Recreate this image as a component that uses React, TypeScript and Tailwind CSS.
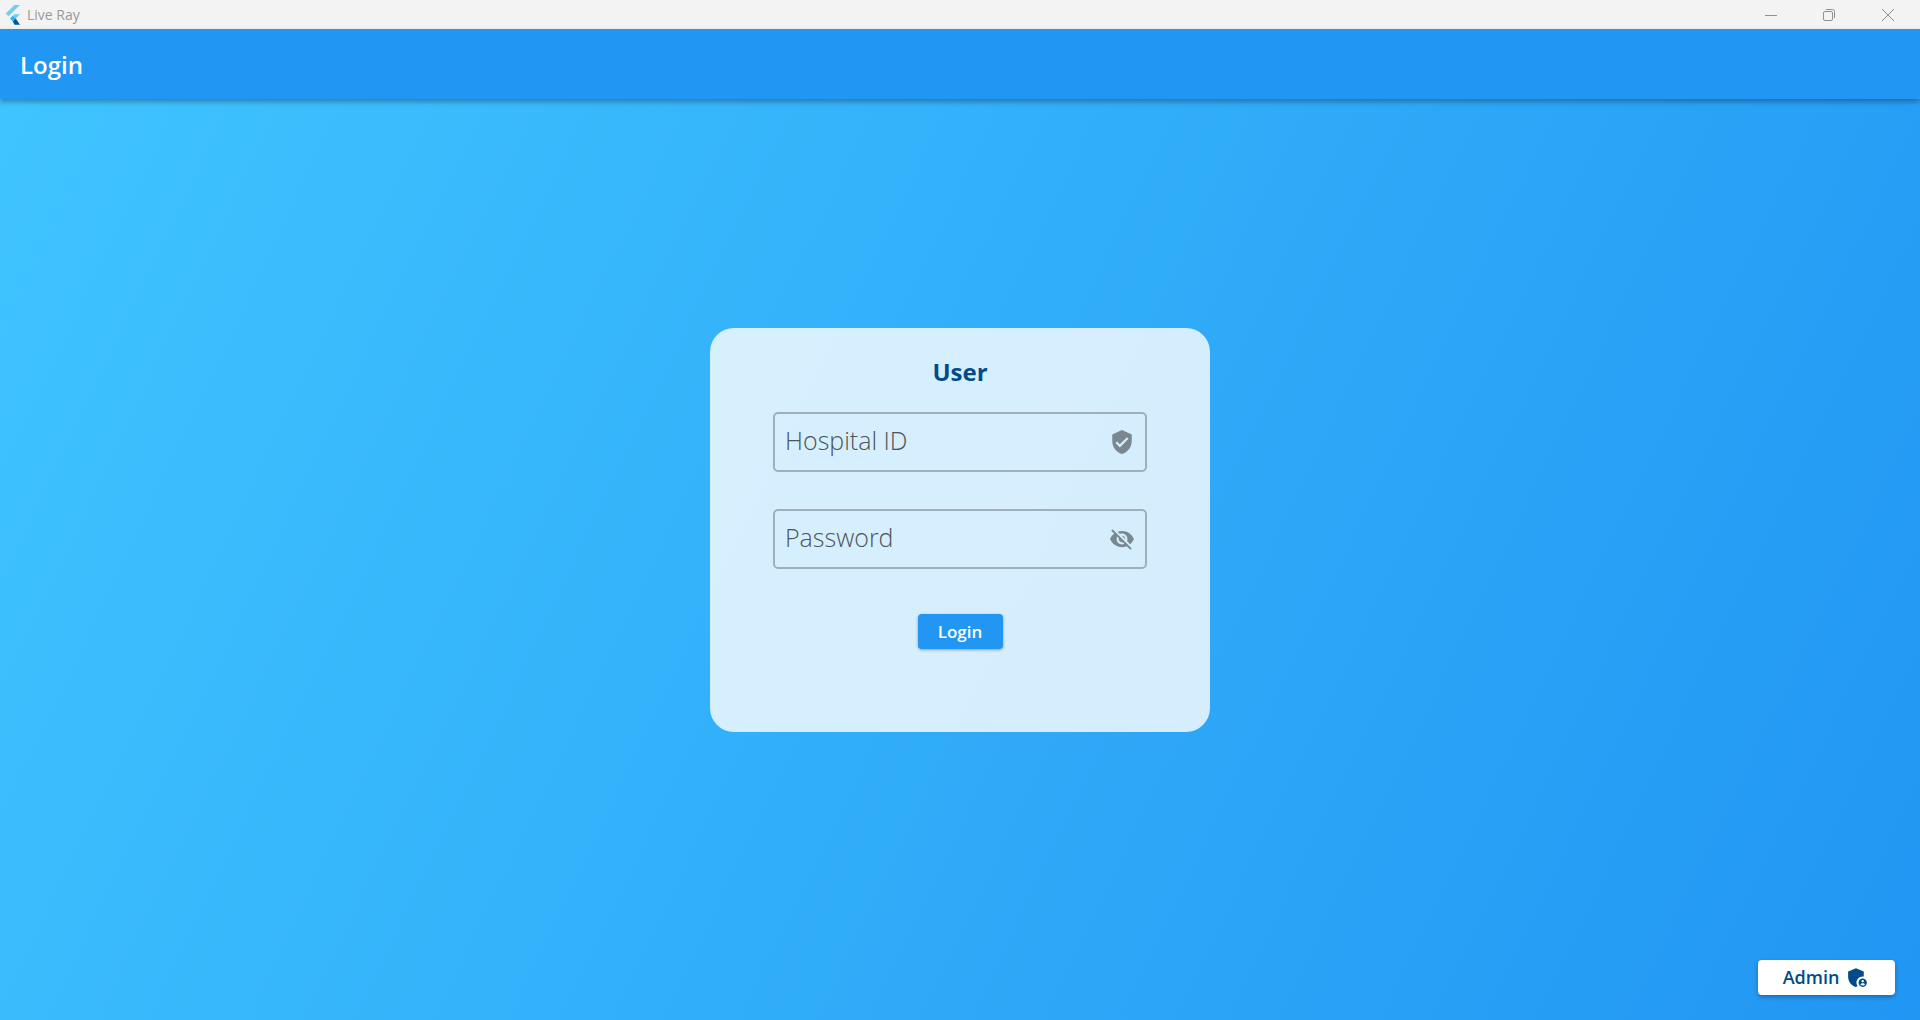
import { MdVerifiedUser, MdVisibilityOff, MdAdminPanelSettings } from 'react-icons/md';

function FlutterLogo() {
    return (
        <svg width="17" height="20" viewBox="0 0 16 20" className="ml-1">
            <path d="M10 0h5.5L4 11.2 1.2 8.5z" fill="#6fcff8" />
            <path d="M15.5 9.2H10L5.6 13.6l2.8 2.8z" fill="#6fcff8" />
            <path d="M5.6 13.6l2.8-2.6 2.8 2.6-2.8 2.8z" fill="#29b6f6" />
            <path d="M8.4 16.4l2.8-2.8 4.3 6.2H10z" fill="#01579b" />
        </svg>
    );
}

function WindowControls() {
    return (
        <div className="flex items-center h-full gap-[46px] pr-[26px]">
            <svg width="12" height="12" viewBox="0 0 12 12" fill="none" stroke="#8f8f8f">
                <path d="M0 6.5h12" />
            </svg>
            <svg width="12" height="12" viewBox="0 0 12 12" fill="none" stroke="#8f8f8f">
                <rect x="0.5" y="2.5" width="9" height="9" rx="1.5" />
                <path d="M3 0.5h6.5a2 2 0 0 1 2 2V9" />
            </svg>
            <svg width="12" height="12" viewBox="0 0 12 12" fill="none" stroke="#8f8f8f" className="ml-px">
                <path d="M0 0l12 12M12 0L0 12" />
            </svg>
        </div>
    );
}

function Field({ label, children, className }: { label: string; children: React.ReactNode; className?: string }) {
    return (
        <div className={`h-[60px] border-2 border-[#9fb0bd] rounded-[5px] flex items-center justify-between pl-[10px] pr-[10px] ${className ?? ''}`}>
            <span className="text-[25px] font-light text-[#4f5458] leading-none -mt-[4px]">{label}</span>
            {children}
        </div>
    );
}

export default function App() {
    return (
        <div className="h-screen flex flex-col overflow-hidden relative font-['Open_Sans',sans-serif]">
            {/* window title bar */}
            <div className="h-[29px] shrink-0 bg-[#f3f3f3] flex items-center justify-between">
                <div className="flex items-center">
                    <FlutterLogo />
                    <span className="ml-[6px] text-[14px] text-[#9a9a9a] leading-none">Live Ray</span>
                </div>
                <WindowControls />
            </div>

            {/* app bar */}
            <div className="h-[70px] shrink-0 bg-[#2196f3] flex items-center pl-5 shadow-[0_3px_5px_rgba(0,0,0,0.3)] z-10">
                <h1 className="text-[24px] font-semibold text-white leading-none mt-[2px]">Login</h1>
            </div>

            {/* body */}
            <div className="flex-1 bg-[linear-gradient(115.6deg,#40c4ff,#2196f3)] pt-[229px]">
                <div className="w-[500px] h-[404px] mx-auto bg-white/80 rounded-[24px] px-[63px] pt-[27px]">
                    <h2 className="text-[24px] font-bold text-[#014b8a] text-center leading-[34px]">User</h2>
                    <Field label="Hospital ID" className="mt-[23px]">
                        <MdVerifiedUser size={26} className="text-[#7a8791]" />
                    </Field>
                    <Field label="Password" className="mt-[37px]">
                        <MdVisibilityOff size={26} className="text-[#7a8791]" />
                    </Field>
                    <div className="flex justify-center mt-[45px]">
                        <button className="w-[85px] h-[35px] bg-[#2196f3] rounded-[4px] text-white text-[17px] font-semibold leading-none shadow-[0_1px_3px_rgba(0,0,0,0.35)]">
                            Login
                        </button>
                    </div>
                </div>
            </div>

            {/* floating admin switch */}
            <button className="absolute right-[25px] bottom-[25px] w-[137px] h-[35px] bg-white rounded-[4px] flex items-center justify-center gap-[6px] text-[#014b8a] text-[18px] font-semibold shadow-[0_2px_4px_rgba(0,0,0,0.3)]">
                Admin
                <MdAdminPanelSettings size={25} />
            </button>
        </div>
    );
}
